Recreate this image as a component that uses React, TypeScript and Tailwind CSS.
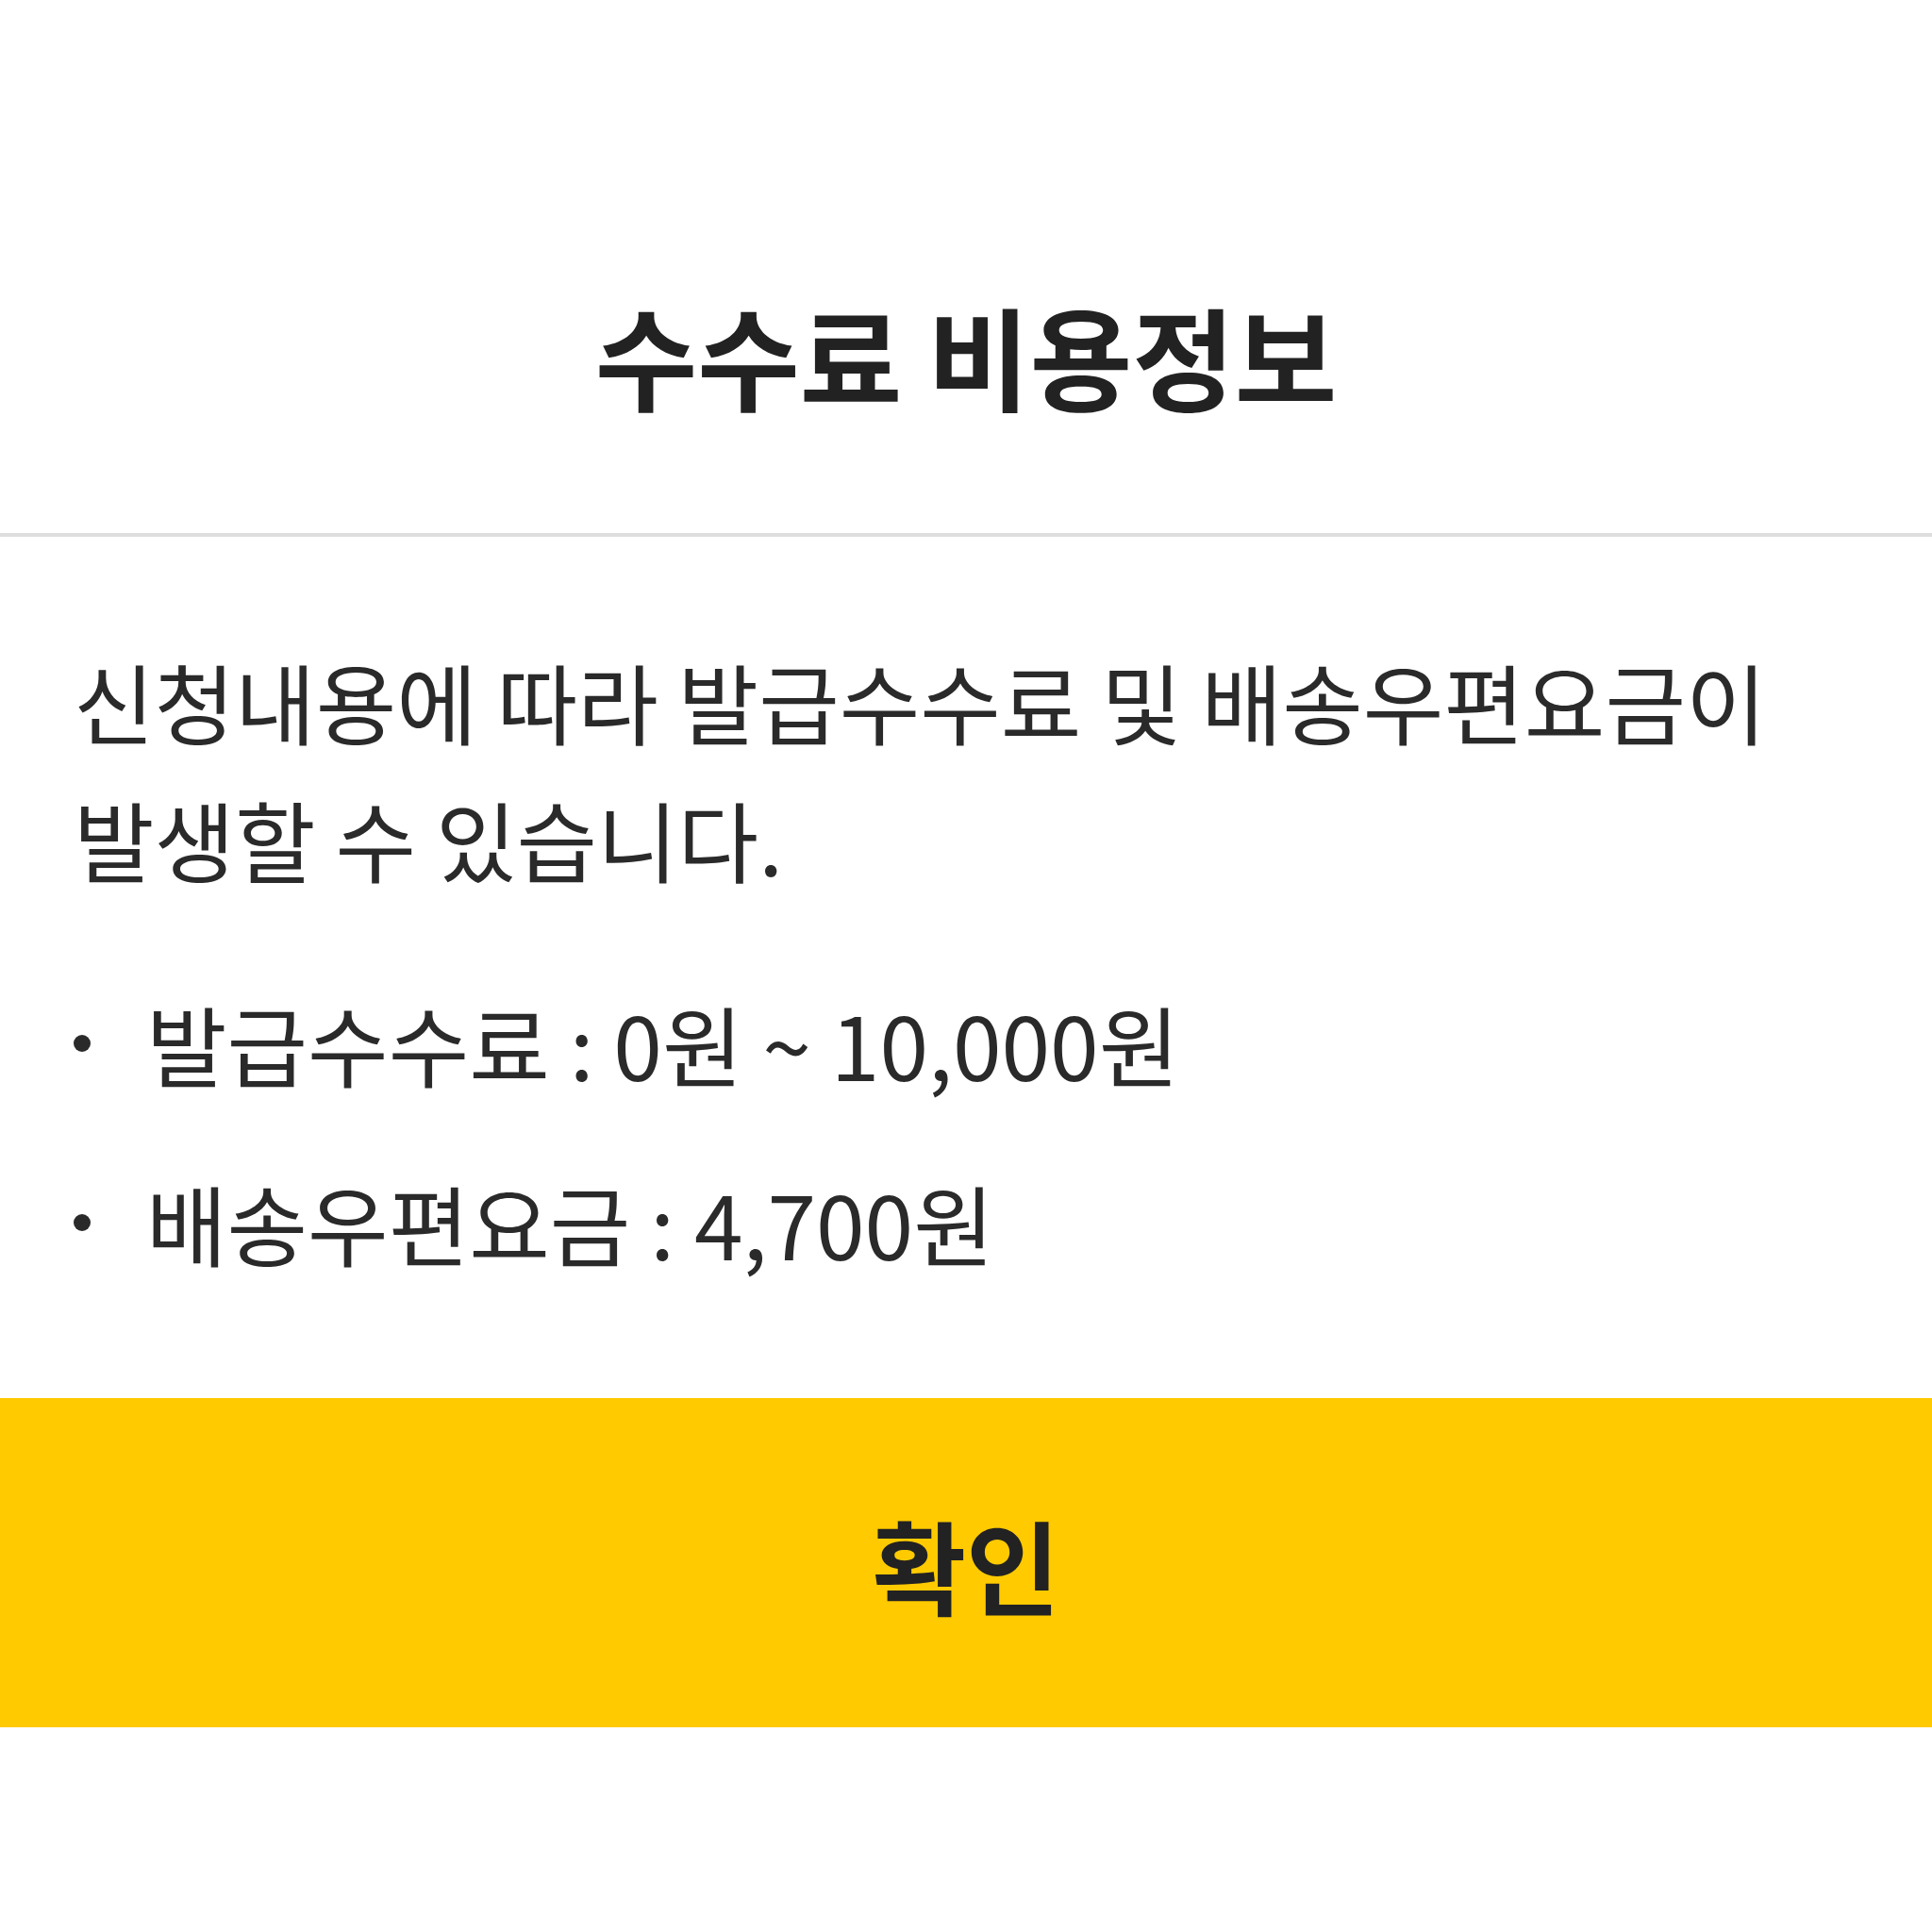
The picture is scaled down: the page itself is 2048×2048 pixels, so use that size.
export default function App() {
  const fees = [
    { label: "발급수수료", value: "0원 ~ 10,000원" },
    { label: "배송우편요금", value: "4,700원" },
  ];

  return (
    <div
      className="flex h-[2048px] w-full flex-col bg-white text-[#222222]"
      style={{ fontFamily: '"Noto Sans CJK KR", "Noto Sans", sans-serif' }}
    >
      <div className="flex justify-center border-b-[4px] border-[#dedede] pb-[130px] pt-[317px]">
        <h1 className="text-[118px] font-bold leading-none">수수료 비용정보</h1>
      </div>

      <div className="px-[78px] pt-[101px] text-[93px] leading-[146px] text-[#2a2a2a]">
        <p className="break-keep">
          신청내용에 따라 발급수수료 및 배송우편요금이 발생할 수 있습니다.
        </p>
        <ul className="mt-[71px] flex flex-col gap-[44px]">
          {fees.map((fee) => (
            <li key={fee.label} className="flex items-center">
              <span className="mr-[59px] h-[18px] w-[18px] shrink-0 rounded-full bg-[#2a2a2a]" />
              <span>
                {fee.label} : {fee.value}
              </span>
            </li>
          ))}
        </ul>
      </div>

      <button
        type="button"
        className="mt-[113px] flex h-[349px] w-full items-center justify-center bg-[#ffca00] text-[108px] font-bold text-[#222222]"
      >
        확인
      </button>
    </div>
  );
}
